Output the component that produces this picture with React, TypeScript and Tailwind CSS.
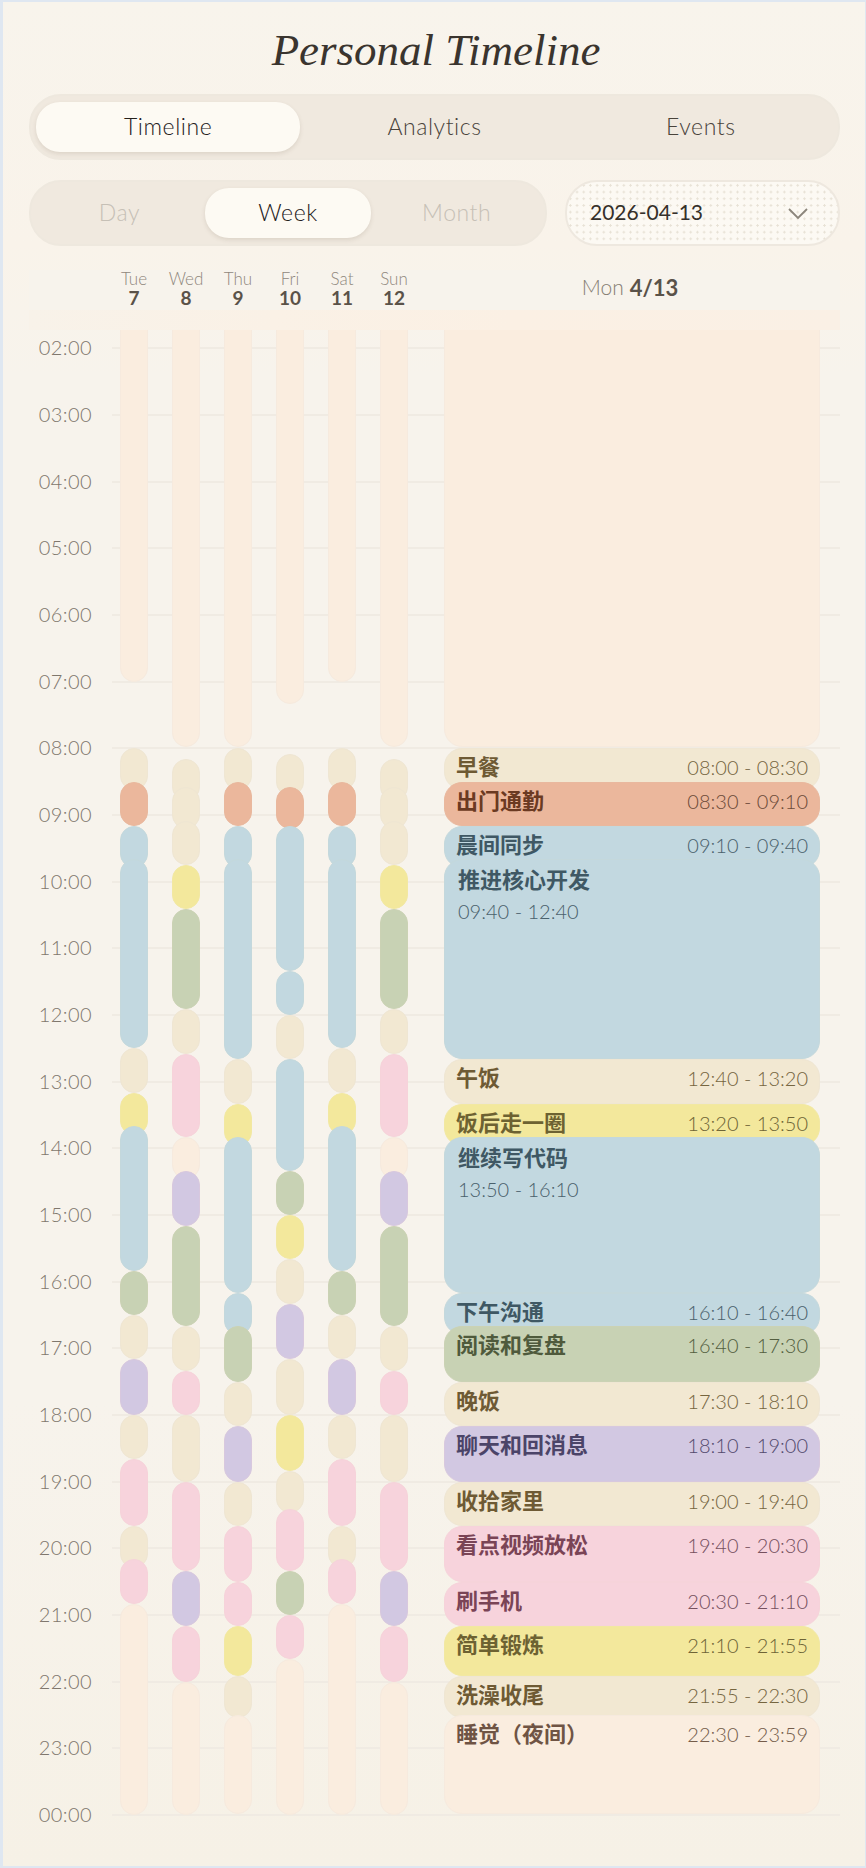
type Tone = "cream" | "orange" | "blue" | "yellow" | "green" | "pink" | "purple" | "peach";

type Slot = [string, string, Tone];

const toneBar: Record<Tone, string> = {
  cream: "bg-[#f2e8d2] border-[#efe6d3]",
  orange: "bg-[#ebb79c] border-[#e9b89e]",
  blue: "bg-[#c2d8e0] border-[#c4d8dc]",
  yellow: "bg-[#f3e89c] border-[#f2e8a2]",
  green: "bg-[#c8d2b4] border-[#cbd2b4]",
  pink: "bg-[#f7d3dc] border-[#f6d3da]",
  purple: "bg-[#d2c8e2] border-[#d8c8de]",
  peach: "bg-[#faeddf] border-[#f6eade]",
};

const toneTitle: Record<Tone, string> = {
  cream: "text-[#6e5a34]",
  orange: "text-[#6b3a22]",
  blue: "text-[#3f5864]",
  yellow: "text-[#6d6232]",
  green: "text-[#4f5a3c]",
  pink: "text-[#7a4456]",
  purple: "text-[#4b4468]",
  peach: "text-[#6f5444]",
};

const toneTime: Record<Tone, string> = {
  cream: "text-[#75653f]",
  orange: "text-[#6b4a38]",
  blue: "text-[#4a616c]",
  yellow: "text-[#6e6436]",
  green: "text-[#535e40]",
  pink: "text-[#75505e]",
  purple: "text-[#524a6d]",
  peach: "text-[#745c4a]",
};

const tueSat: Slot[] = [
  ["00:00", "07:00", "peach"],
  ["08:00", "08:30", "cream"],
  ["08:30", "09:10", "orange"],
  ["09:10", "09:40", "blue"],
  ["09:40", "12:30", "blue"],
  ["12:30", "13:10", "cream"],
  ["13:10", "13:40", "yellow"],
  ["13:40", "15:50", "blue"],
  ["15:50", "16:30", "green"],
  ["16:30", "17:10", "cream"],
  ["17:10", "18:00", "purple"],
  ["18:00", "18:40", "cream"],
  ["18:40", "19:40", "pink"],
  ["19:40", "20:10", "cream"],
  ["20:10", "20:50", "pink"],
  ["20:50", "24:00", "peach"],
];

const wedSun: Slot[] = [
  ["00:00", "07:59", "peach"],
  ["08:10", "08:35", "cream"],
  ["08:35", "09:05", "cream"],
  ["09:05", "09:45", "cream"],
  ["09:45", "10:25", "yellow"],
  ["10:25", "11:55", "green"],
  ["11:55", "12:35", "cream"],
  ["12:35", "13:50", "pink"],
  ["13:50", "14:20", "peach"],
  ["14:20", "15:10", "purple"],
  ["15:10", "16:40", "green"],
  ["16:40", "17:20", "cream"],
  ["17:20", "18:00", "pink"],
  ["18:00", "19:00", "cream"],
  ["19:00", "20:20", "pink"],
  ["20:20", "21:10", "purple"],
  ["21:10", "22:00", "pink"],
  ["22:00", "24:00", "peach"],
];

const fri: Slot[] = [
  ["00:00", "07:20", "peach"],
  ["08:05", "08:35", "cream"],
  ["08:35", "09:10", "orange"],
  ["09:10", "11:20", "blue"],
  ["11:20", "12:00", "blue"],
  ["12:00", "12:40", "cream"],
  ["12:40", "14:20", "blue"],
  ["14:20", "15:00", "green"],
  ["15:00", "15:40", "yellow"],
  ["15:40", "16:20", "cream"],
  ["16:20", "17:10", "purple"],
  ["17:10", "18:00", "cream"],
  ["18:00", "18:50", "yellow"],
  ["18:50", "19:25", "cream"],
  ["19:25", "20:20", "pink"],
  ["20:20", "21:00", "green"],
  ["21:00", "21:40", "pink"],
  ["21:40", "24:00", "peach"],
];

const monday: { from: string; to: string; tone: Tone; title?: string }[] = [
  { from: "00:00", to: "07:59", tone: "peach" },
  { from: "08:00", to: "08:30", tone: "cream", title: "早餐" },
  { from: "08:30", to: "09:10", tone: "orange", title: "出门通勤" },
  { from: "09:10", to: "09:40", tone: "blue", title: "晨间同步" },
  { from: "09:40", to: "12:40", tone: "blue", title: "推进核心开发" },
  { from: "12:40", to: "13:20", tone: "cream", title: "午饭" },
  { from: "13:20", to: "13:50", tone: "yellow", title: "饭后走一圈" },
  { from: "13:50", to: "16:10", tone: "blue", title: "继续写代码" },
  { from: "16:10", to: "16:40", tone: "blue", title: "下午沟通" },
  { from: "16:40", to: "17:30", tone: "green", title: "阅读和复盘" },
  { from: "17:30", to: "18:10", tone: "cream", title: "晚饭" },
  { from: "18:10", to: "19:00", tone: "purple", title: "聊天和回消息" },
  { from: "19:00", to: "19:40", tone: "cream", title: "收拾家里" },
  { from: "19:40", to: "20:30", tone: "pink", title: "看点视频放松" },
  { from: "20:30", to: "21:10", tone: "pink", title: "刷手机" },
  { from: "21:10", to: "21:55", tone: "yellow", title: "简单锻炼" },
  { from: "21:55", to: "22:30", tone: "cream", title: "洗澡收尾" },
  { from: "22:30", to: "23:59", tone: "peach", title: "睡觉（夜间）" },
];

const thu: Slot[] = monday.map((s) => [s.from, s.to, s.tone]);

const days = [
  { name: "Tue", num: 7, slots: tueSat },
  { name: "Wed", num: 8, slots: wedSun },
  { name: "Thu", num: 9, slots: thu },
  { name: "Fri", num: 10, slots: fri },
  { name: "Sat", num: 11, slots: tueSat },
  { name: "Sun", num: 12, slots: wedSun },
];

const hours = Array.from({ length: 23 }, (_, i) => i + 2);

const toMin = (t: string) => {
  const [h, m] = t.split(":").map(Number);
  return h * 60 + m;
};

const yOf = (min: number) => min * (1600 / 1440) - 115;
const slotBox = (from: string, to: string) => {
  const top = yOf(toMin(from));
  return { top, height: Math.max(yOf(toMin(to)) - top, 42) };
};

const Segment = ({ items, active, muted }: { items: string[]; active: string; muted?: boolean }) => (
  <div className="flex gap-[2px] rounded-[32px] border-2 border-[#eee8de] bg-[#f0e9df] px-[5px] py-[6px]">
    {items.map((item) => (
      <div
        key={item}
        className={
          item === active
            ? "flex h-[50px] flex-1 items-center justify-center rounded-[24px] bg-[#fdfaf3] pb-[2px] text-[#24201b] shadow-[0_2px_4px_rgba(120,100,80,0.16)]"
            : muted
              ? "flex h-[50px] flex-1 items-center justify-center pb-[2px] text-[#c6c0b6]"
              : "flex h-[50px] flex-1 items-center justify-center pb-[2px] text-[#49433b]"
        }
      >
        {item}
      </div>
    ))}
  </div>
);

const App = () => {
  return (
    <div className="h-[1868px] w-[866px] overflow-hidden border-t-2 border-r border-b-2 border-l-[3px] border-[#dfe7f1] bg-[linear-gradient(180deg,#f8f4ec_0%,#f9f3ea_13%,#f7f3ec_20%,#f7f3ec_75%,#f6f1e6_100%)] font-['Lato','Noto_Sans_CJK_SC',sans-serif] font-light">
      <div className="flex h-[92px] items-center justify-center pl-[4px] pt-[4px]">
        <h1 className="font-['Liberation_Serif',serif] text-[45px] font-normal italic leading-none text-[#3a342e]">
          Personal Timeline
        </h1>
      </div>

      <div className="ml-[26px] mr-[25px] text-[23px] tracking-[0.025em]">
        <Segment items={["Timeline", "Analytics", "Events"]} active="Timeline" />
      </div>

      <div className="ml-[26px] mr-[25px] mt-[20px] flex gap-[18px] text-[23px] tracking-[0.025em]">
        <div className="w-[518px]">
          <Segment items={["Day", "Week", "Month"]} active="Week" muted />
        </div>
        <div className="flex h-[66px] flex-1 items-center justify-between rounded-[32px] border-2 border-[#eee8df] bg-[#fcf9f3] bg-[radial-gradient(circle,#e8e2d6_1px,transparent_1.3px)] bg-[length:6.7px_6.7px] pl-[23px] pr-[30px] text-[21px] font-normal tracking-normal text-[#35302a]">
          <span className="pb-[2px]">2026-04-13</span>
          <svg width="20" height="11" viewBox="0 0 20 11" fill="none" stroke="#8b857b" strokeWidth="1.8">
            <polyline points="1,1 10,10 19,1" />
          </svg>
        </div>
      </div>

      <div className="ml-[26px] mr-[25px] mt-[24px] flex h-[40px] bg-[#f7f3ec]">
        <div className="w-[79px]" />
        {days.map((d) => (
          <div key={d.name} className="flex w-[52px] flex-col items-center justify-center pb-[4px]">
            <span className="text-[17px] leading-[19px] text-[#8f877d]">{d.name}</span>
            <span className="text-[19px] font-bold leading-[19px] text-[#5a5249]">{d.num}</span>
          </div>
        ))}
        <div className="flex flex-1 items-center justify-center gap-[6px] pb-[6px]">
          <span className="text-[21px] text-[#857d73]">Mon</span>
          <span className="text-[22px] font-bold text-[#5a5249]">4/13</span>
        </div>
      </div>

      <div className="ml-[26px] mr-[25px] h-[20px] bg-[linear-gradient(90deg,#f8f2e9_0%,#faf1e6_30%,#fbf0e4_60%,#faf0e5_100%)]" />

      <div className="relative ml-[26px] mr-[25px] flex h-[1536px] overflow-hidden pl-[83px]">
        {hours.map((h) => {
          const y = yOf(h * 60);
          return (
            <div key={h}>
              <div className="absolute left-[83px] right-0 h-[2px] bg-[#f0ebe3]" style={{ top: y - 1 }} />
              <div
                className="absolute left-0 w-[63px] text-right text-[20px] leading-[24px] tracking-[0.02em] text-[#7f776d]"
                style={{ top: y - 13 }}
              >
                {String(h % 24).padStart(2, "0")}:00
              </div>
            </div>
          );
        })}

        {days.map((d) => (
          <div key={d.name} className="relative h-full w-[52px] shrink-0">
            {d.slots.map(([from, to, tone]) => (
              <div
                key={from}
                className={`absolute left-[8px] w-[28px] rounded-[14px] border ${toneBar[tone]}`}
                style={slotBox(from, to)}
              />
            ))}
          </div>
        ))}

        <div className="relative mx-[20px] h-full flex-1">
          {monday.map(({ from, to, tone, title }) => {
            const tall = toMin(to) - toMin(from) >= 120 && !!title;
            return (
              <div
                key={from}
                className={`absolute left-0 right-0 rounded-[18px] border ${toneBar[tone]}`}
                style={slotBox(from, to)}
              >
                {title && tall && (
                  <div className="pl-[13px] pt-[5px]">
                    <div className={`text-[22px] font-semibold leading-[30px] ${toneTitle[tone]}`}>{title}</div>
                    <div className={`mt-[1px] text-[20px] leading-[30px] ${toneTime[tone]}`}>
                      {from} - {to}
                    </div>
                  </div>
                )}
                {title && !tall && (
                  <div className="flex items-center justify-between pl-[11px] pr-[11px] pt-[3px]">
                    <span className={`text-[22px] font-semibold leading-[30px] ${toneTitle[tone]}`}>{title}</span>
                    <span className={`text-[20px] leading-[30px] ${toneTime[tone]}`}>
                      {from} - {to}
                    </span>
                  </div>
                )}
              </div>
            );
          })}
        </div>
      </div>
    </div>
  );
};

export default App;
